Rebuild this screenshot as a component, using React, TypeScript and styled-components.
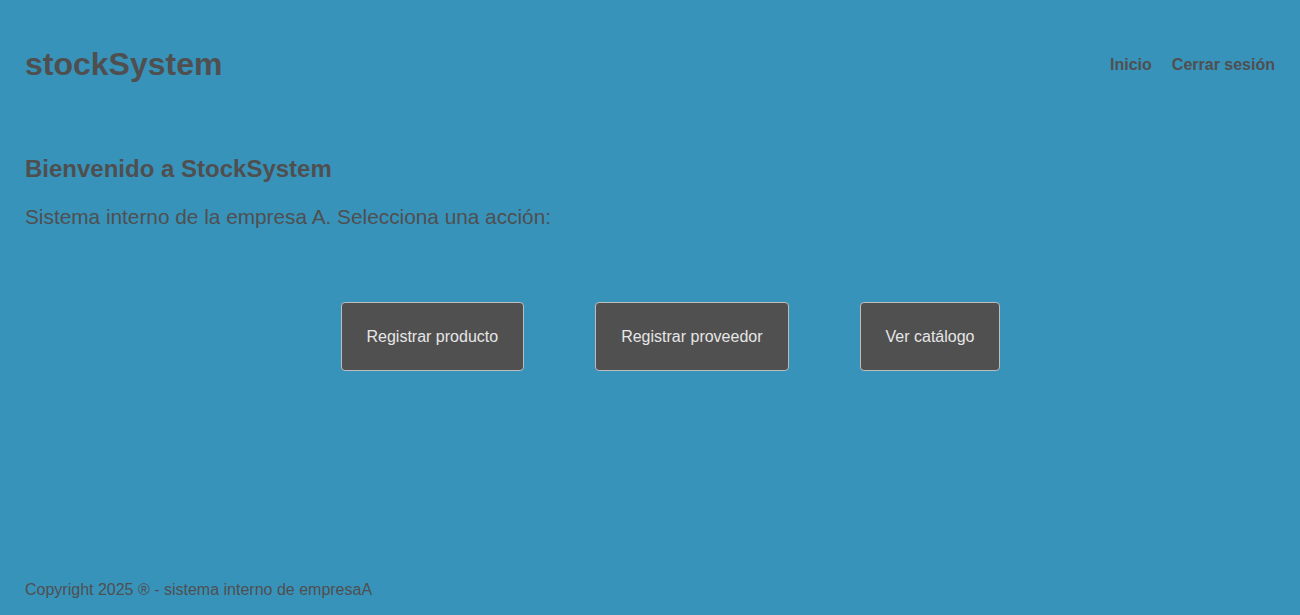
import React from "react";
import styled, { createGlobalStyle } from "styled-components";

const Global = createGlobalStyle`
  html, body { margin: 0; padding: 0; }
  body {
    background: #3893bb;
    font-family: "Liberation Sans", Arial, sans-serif;
    color: #4f4f4f;
  }
`;

const Page = styled.div`
  min-height: 615px;
  display: flex;
  flex-direction: column;
  box-sizing: border-box;
`;

const Header = styled.header`
  height: 128px;
  padding: 0 25px 0 25px;
  display: flex;
  align-items: center;
  justify-content: space-between;
`;

const Brand = styled.h1`
  margin: 0;
  font-size: 32px;
  font-weight: bold;
  line-height: 37px;
`;

const Nav = styled.nav`
  display: flex;
  gap: 20px;
  padding-top: 2px;
`;

const NavLink = styled.a`
  font-size: 16px;
  font-weight: bold;
  color: #4f4f4f;
  text-decoration: none;
  cursor: pointer;
`;

const Main = styled.main`
  flex: 1;
  padding: 0 25px;
`;

const Title = styled.h2`
  margin: 27px 0 0;
  font-size: 24px;
  font-weight: bold;
  line-height: 28px;
`;

const Lead = styled.p`
  margin: 22px 0 0;
  font-size: 20.8px;
  line-height: 24px;
`;

const Actions = styled.div`
  display: flex;
  justify-content: center;
  gap: 71px;
  margin-top: 73px;
  padding-left: 41px;
`;

const ActionButton = styled.button`
  background: #505050;
  color: #e6e6e6;
  border: 1px solid #bdbdbd;
  border-radius: 4px;
  padding: 24px 25px;
  font-family: "Liberation Sans", Arial, sans-serif;
  font-size: 16px;
  line-height: 19px;
  cursor: pointer;
`;

const Footer = styled.footer`
  padding: 0 25px 16px;
  font-size: 16px;
  line-height: 18px;
`;

export default function App() {
  return (
    <>
      <Global />
      <Page>
        <Header>
          <Brand>stockSystem</Brand>
          <Nav>
            <NavLink>Inicio</NavLink>
            <NavLink>Cerrar sesión</NavLink>
          </Nav>
        </Header>
        <Main>
          <Title>Bienvenido a StockSystem</Title>
          <Lead>Sistema interno de la empresa A. Selecciona una acción:</Lead>
          <Actions>
            <ActionButton>Registrar producto</ActionButton>
            <ActionButton>Registrar proveedor</ActionButton>
            <ActionButton>Ver catálogo</ActionButton>
          </Actions>
        </Main>
        <Footer>Copyright 2025 ® - sistema interno de empresaA</Footer>
      </Page>
    </>
  );
}
